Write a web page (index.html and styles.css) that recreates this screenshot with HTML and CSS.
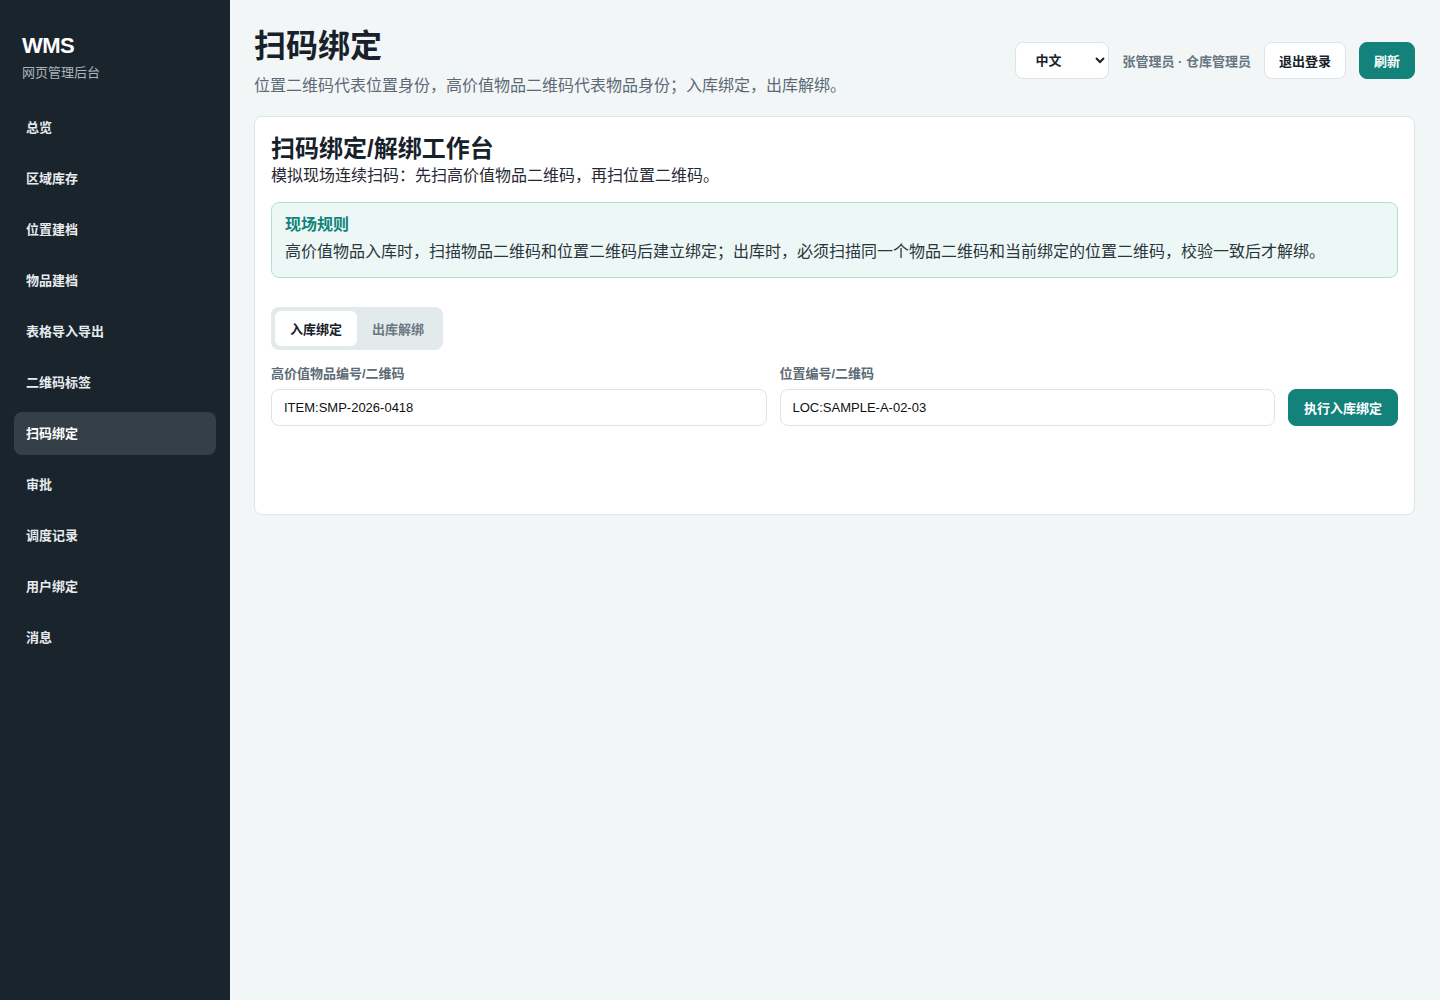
FILE: index.html
```html
<!DOCTYPE html>
<html lang="zh-CN">
<head>
    <meta charset="UTF-8">
    <meta name="viewport" content="width=device-width, initial-scale=1.0">
    <title>WMS 扫码绑定</title>
    <link rel="stylesheet" href="styles.css">
</head>
<body>
    <div class="layout">
        <aside class="sidebar">
            <div class="brand">
                <div class="brand-name">WMS</div>
                <div class="brand-sub">网页管理后台</div>
            </div>
            <nav class="nav">
                <a class="nav-item">总览</a>
                <a class="nav-item">区域库存</a>
                <a class="nav-item">位置建档</a>
                <a class="nav-item">物品建档</a>
                <a class="nav-item">表格导入导出</a>
                <a class="nav-item">二维码标签</a>
                <a class="nav-item active">扫码绑定</a>
                <a class="nav-item">审批</a>
                <a class="nav-item">调度记录</a>
                <a class="nav-item">用户绑定</a>
                <a class="nav-item">消息</a>
            </nav>
        </aside>

        <main class="main">
            <header class="topbar">
                <div class="page-head">
                    <h1>扫码绑定</h1>
                    <p class="page-desc">位置二维码代表位置身份，高价值物品二维码代表物品身份；入库绑定，出库解绑。</p>
                </div>
                <div class="top-actions">
                    <select class="lang-select">
                        <option>中文</option>
                        <option>English</option>
                    </select>
                    <span class="user-info">张管理员 · 仓库管理员</span>
                    <button class="btn btn-light">退出登录</button>
                    <button class="btn btn-primary">刷新</button>
                </div>
            </header>

            <section class="card">
                <h2>扫码绑定/解绑工作台</h2>
                <p class="card-desc">模拟现场连续扫码：先扫高价值物品二维码，再扫位置二维码。</p>

                <div class="notice">
                    <div class="notice-title">现场规则</div>
                    <div class="notice-text">高价值物品入库时，扫描物品二维码和位置二维码后建立绑定；出库时，必须扫描同一个物品二维码和当前绑定的位置二维码，校验一致后才解绑。</div>
                </div>

                <div class="tabs">
                    <button class="tab active">入库绑定</button>
                    <button class="tab">出库解绑</button>
                </div>

                <div class="scan-form">
                    <label class="field">
                        <span class="field-label">高价值物品编号/二维码</span>
                        <input type="text" value="ITEM:SMP-2026-0418">
                    </label>
                    <label class="field">
                        <span class="field-label">位置编号/二维码</span>
                        <input type="text" value="LOC:SAMPLE-A-02-03">
                    </label>
                    <button class="btn btn-primary btn-submit">执行入库绑定</button>
                </div>
            </section>
        </main>
    </div>
</body>
</html>
```

FILE: styles.css
```css
* {
    box-sizing: border-box;
}
body {
    margin: 0;
    font-family: "Liberation Sans", "Noto Sans CJK SC", sans-serif;
    background-color: #f2f6f7;
    color: #1b252d;
}
.layout {
    display: flex;
    min-height: 1000px;
}

/* sidebar */
.sidebar {
    width: 230px;
    flex-shrink: 0;
    background: #1a242d;
    padding: 33px 14px 0;
}
.brand {
    padding: 0 8px;
    margin-bottom: 24px;
}
.brand-name {
    color: #fff;
    font-size: 22px;
    font-weight: bold;
    line-height: 26px;
    letter-spacing: -0.5px;
}
.brand-sub {
    color: #aab5be;
    font-size: 13px;
    line-height: 18px;
    margin-top: 5px;
}
.nav {
    display: flex;
    flex-direction: column;
    gap: 8px;
}
.nav-item {
    display: block;
    height: 43px;
    line-height: 43px;
    padding: 0 12px;
    border-radius: 8px;
    color: #e6ebee;
    font-size: 13px;
    font-weight: bold;
    cursor: pointer;
}
.nav-item.active {
    background: #353f47;
    color: #fff;
}

/* main */
.main {
    flex: 1;
    padding: 24px 25px 24px 24px;
}
.topbar {
    display: flex;
    justify-content: space-between;
    align-items: flex-start;
    margin-bottom: 19px;
}
.page-head h1 {
    margin: 0;
    font-size: 32px;
    line-height: 44px;
    font-weight: bold;
    color: #17212a;
}
.page-desc {
    margin: 7px 0 0;
    font-size: 16px;
    line-height: 22px;
    color: #5b6a75;
}
.top-actions {
    display: flex;
    align-items: center;
    gap: 13px;
    margin-top: 18px;
}
.lang-select {
    width: 94px;
    height: 37px;
    padding: 0 8px 0 15px;
    border: 1px solid #dde4e7;
    border-radius: 8px;
    background: #fff;
    font-family: inherit;
    font-size: 13px;
    font-weight: bold;
    color: #17212a;
}
.user-info {
    font-size: 13px;
    font-weight: bold;
    color: #66757f;
}
.btn {
    height: 37px;
    padding: 0 14px;
    border-radius: 8px;
    font-family: inherit;
    font-size: 13px;
    font-weight: bold;
    cursor: pointer;
}
.btn-light {
    background: #fff;
    border: 1px solid #dde4e7;
    color: #17212a;
}
.btn-primary {
    background: #12827a;
    border: 1px solid #12827a;
    color: #fff;
}

/* card */
.card {
    background: #fff;
    border: 1px solid #dde5e8;
    border-radius: 8px;
    padding: 15px 16px 88px 16px;
}
.card h2 {
    margin: 0;
    font-size: 24px;
    line-height: 33px;
    font-weight: bold;
    color: #17212a;
}
.card-desc {
    margin: 0;
    font-size: 16px;
    line-height: 22px;
    color: #1f2a33;
}
.notice {
    margin-top: 15px;
    background: #edf8f6;
    border: 1px solid #b8ddd6;
    border-radius: 8px;
    padding: 11px 13px 13px;
}
.notice-title {
    color: #12827a;
    font-size: 16px;
    font-weight: bold;
    line-height: 22px;
}
.notice-text {
    margin-top: 4px;
    font-size: 16px;
    line-height: 24px;
    color: #2a353d;
}
.tabs {
    display: inline-flex;
    margin-top: 29px;
    padding: 4px;
    background: #e3eaec;
    border-radius: 8px;
}
.tab {
    height: 35px;
    padding: 0 15px;
    border: none;
    border-radius: 6px;
    background: transparent;
    font-family: inherit;
    font-size: 13px;
    font-weight: bold;
    color: #6b7882;
    cursor: pointer;
}
.tab.active {
    background: #fff;
    color: #17212a;
}
.scan-form {
    display: flex;
    align-items: flex-end;
    gap: 13px;
    margin-top: 15px;
}
.field {
    flex: 1;
    display: flex;
    flex-direction: column;
    gap: 6px;
}
.field-label {
    font-size: 13px;
    font-weight: bold;
    line-height: 18px;
    color: #5b6a75;
}
.field input {
    height: 37px;
    padding: 0 12px;
    border: 1px solid #dde4e7;
    border-radius: 8px;
    font-family: inherit;
    font-size: 13px;
    color: #111;
}
.btn-submit {
    height: 37px;
    padding: 0 15px;
}
```
